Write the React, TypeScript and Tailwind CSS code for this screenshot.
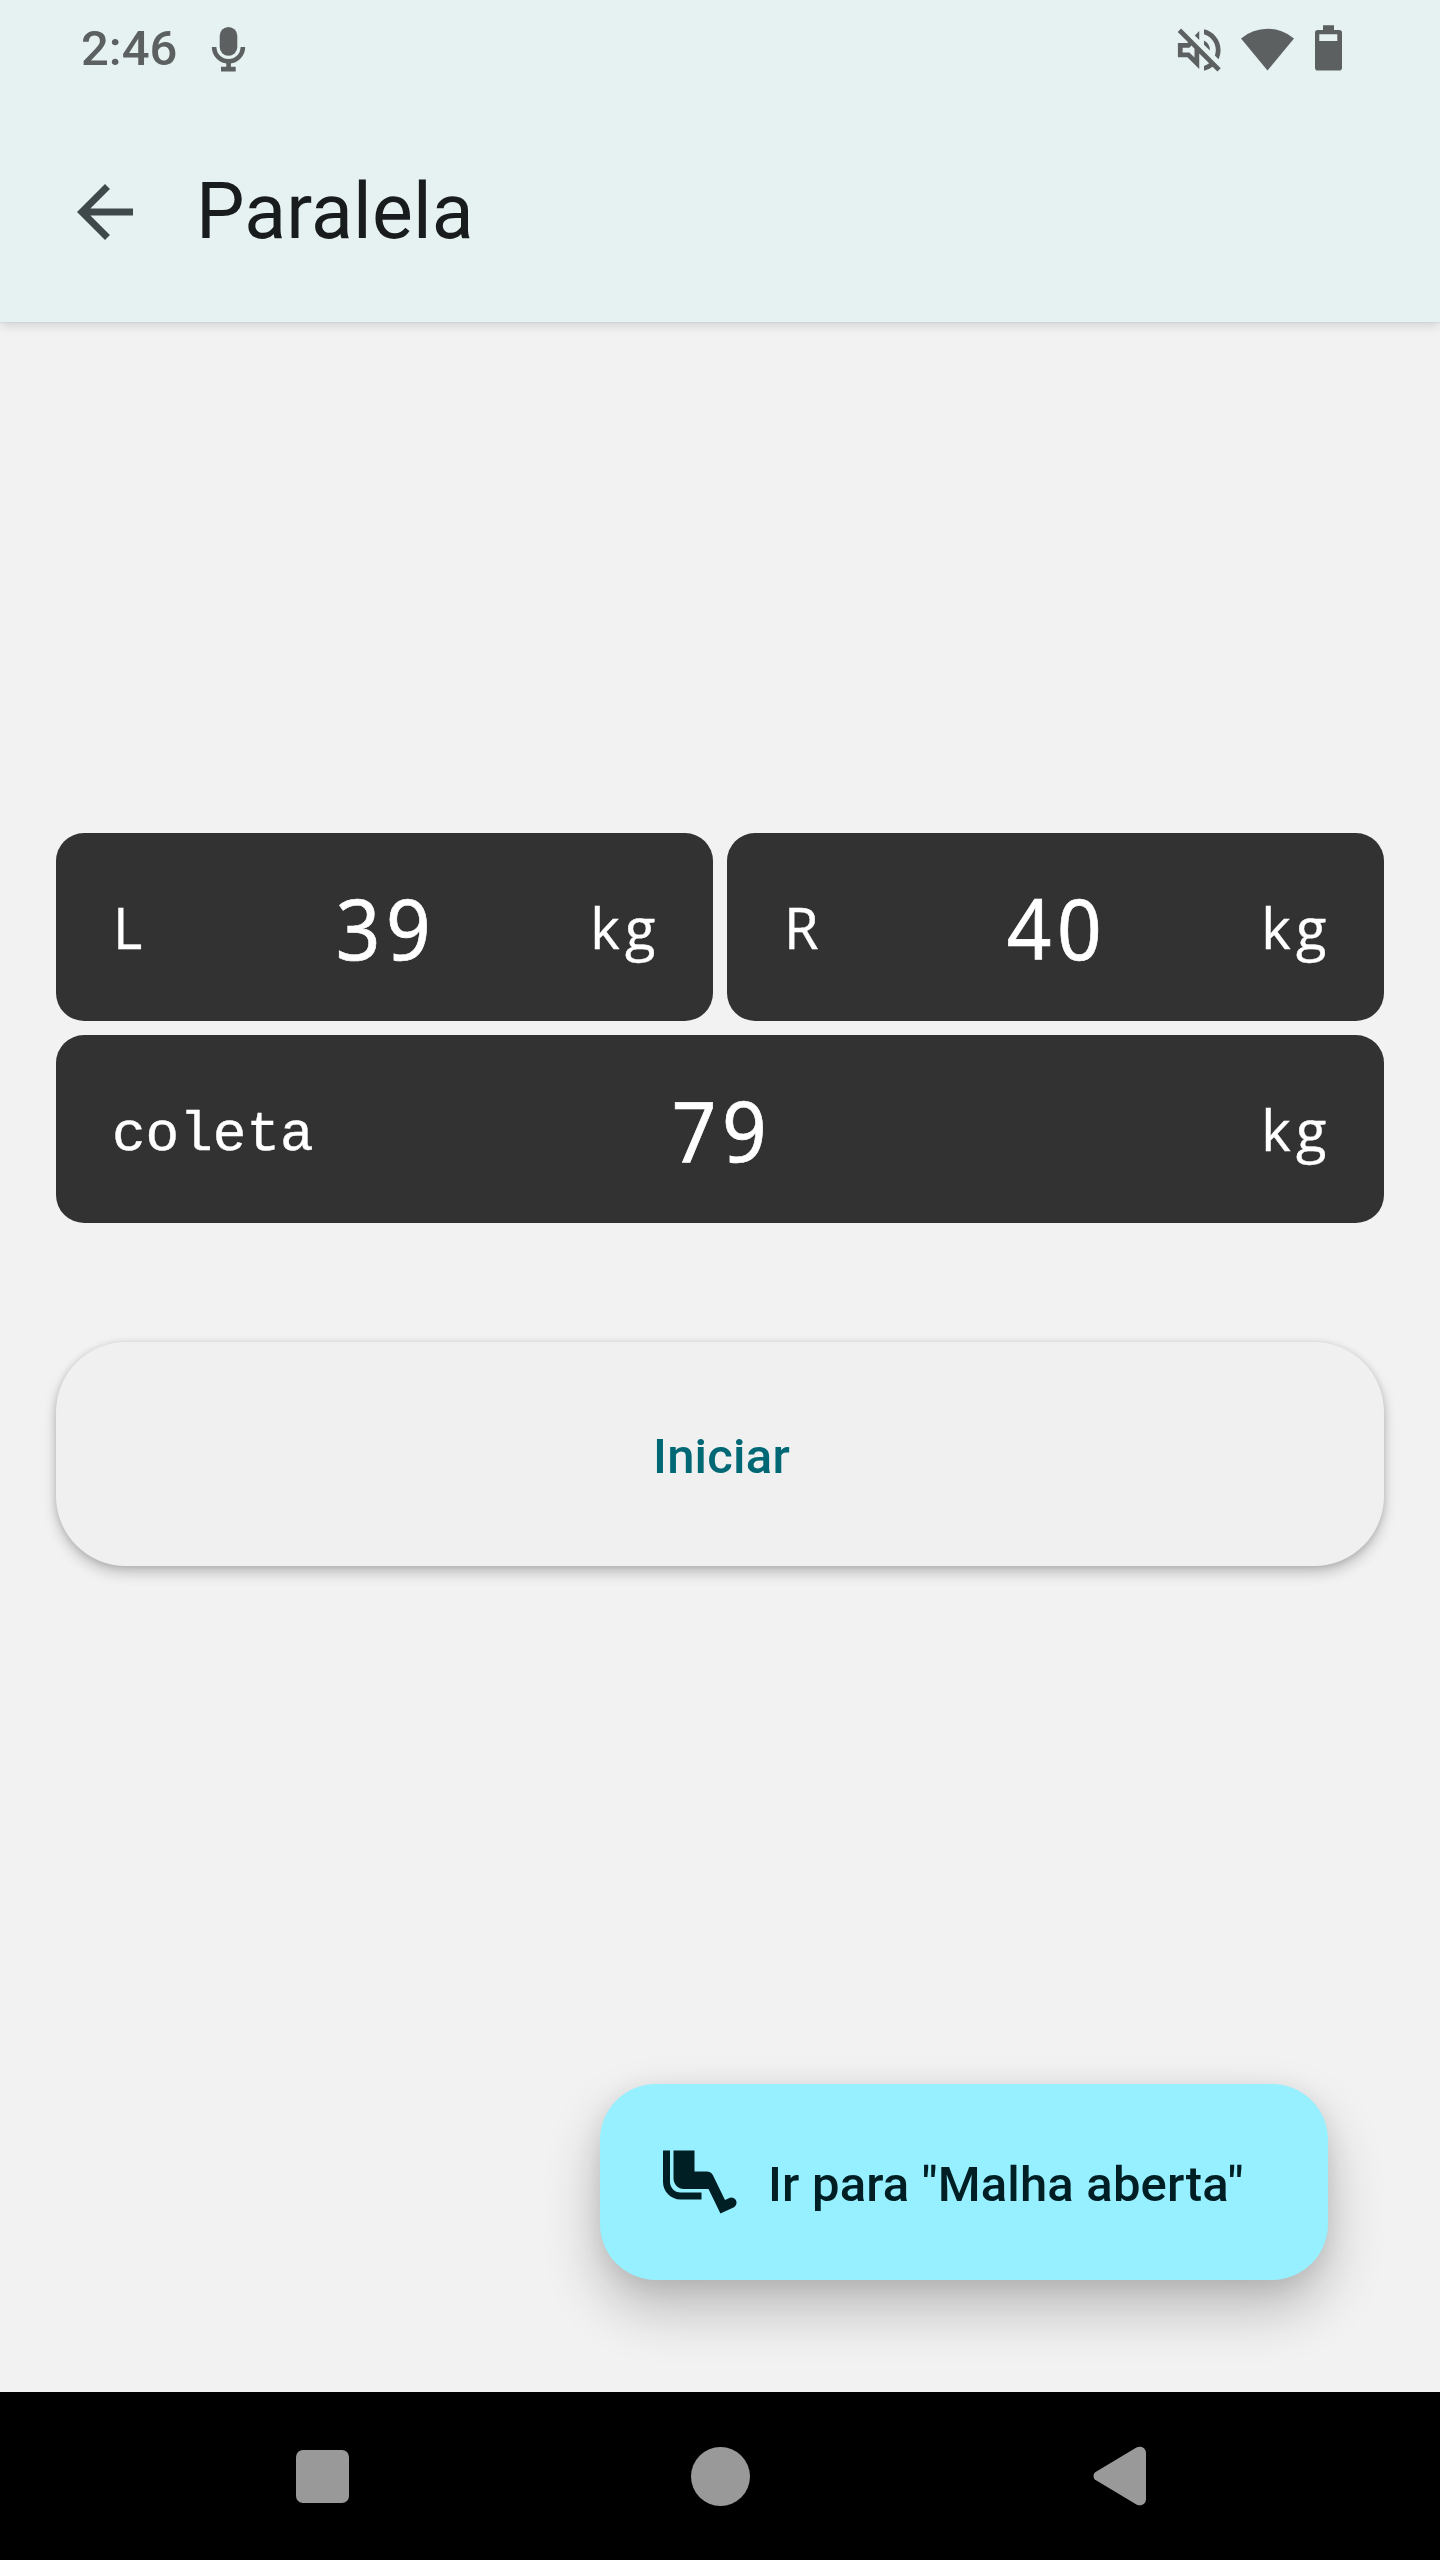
import React from "react";

function StatusBar() {
  return (
    <div className="flex h-[101px] items-start justify-between pl-[81px] pr-[90px]">
      <div className="flex h-[97px] items-center">
        <span className="w-[127px] text-[49px] font-medium leading-none">2:46</span>
        <svg width="40" height="56" viewBox="208 21 40 56" className="mt-px" fill="currentColor">
          <rect x="219.7" y="27" width="17.6" height="28.8" rx="8.8" />
          <path d="M214.1 47a14.4 14.4 0 0 0 28.8 0" fill="none" stroke="currentColor" strokeWidth="4.6" />
          <path d="M226.3 62h4.6v4.8h4.8v4.8H221v-4.8h5.3z" />
        </svg>
      </div>
      <svg width="180" height="60" viewBox="1170 20 180 60" className="mt-5" fill="currentColor">
        <g transform="translate(1170.8 21.6) scale(2.37)">
          <path d="M4.34 2.93L2.93 4.34 7.29 8.7 7 9H3v6h4l5 5v-6.59l4.18 4.18c-.65.49-1.38.88-2.18 1.11v2.06a8.94 8.94 0 0 0 3.61-1.75l2.05 2.05 1.41-1.41L4.34 2.93zM10 15.17L7.83 13H5v-2h2.83l.88-.88L10 11.41v3.76zM19 12c0 .82-.15 1.61-.41 2.34l1.53 1.53c.56-1.17.88-2.48.88-3.87 0-4.28-2.99-7.86-7-8.77v2.06c2.89.86 5 3.54 5 6.71zm-7-8l-1.88 1.88L12 7.76zm4.5 8A4.5 4.5 0 0 0 14 7.97v1.79l2.48 2.48c.01-.08.02-.16.02-.24z" />
        </g>
        <path d="M1241 38.4A41 41 0 0 1 1294 38.4L1267.5 70.4z" />
        <path
          fillRule="evenodd"
          d="M1323 25.3h11V30h5.2a2.8 2.8 0 0 1 2.8 2.8v35a2.8 2.8 0 0 1-2.8 2.8h-21.4a2.8 2.8 0 0 1-2.8-2.8v-35a2.8 2.8 0 0 1 2.8-2.8h5.2zM1319.3 34.3V41h18v-6.7z"
        />
      </svg>
    </div>
  );
}

function Reading({ label, value, wide = false }: { label: string; value: string; wide?: boolean }) {
  return (
    <div
      className={
        "grid h-[188px] grid-cols-[1fr_auto_1fr] items-center rounded-[28px] bg-[#323232] px-14 font-['Open_Sans',sans-serif] text-[56px] leading-none text-white [-webkit-text-stroke:0.4px_white]" +
        (wide ? " col-span-2" : "")
      }
    >
      {wide ? (
        <span className="pt-[12px] font-['Liberation_Mono',monospace]">{label}</span>
      ) : (
        <span className="pl-px tracking-tighter">{label}</span>
      )}
      <span className="scale-x-[0.93] pl-[4px] pt-[2px] font-['Noto_Sans',sans-serif] text-[84px] tracking-[6.2px] [-webkit-text-stroke:0.7px_white]">
        {value}
      </span>
      <span className="-mr-1 justify-self-end tracking-[5.5px]">kg</span>
    </div>
  );
}

export default function App() {
  return (
    <div className="flex h-[2560px] w-[1440px] flex-col overflow-hidden bg-[#f2f2f2] font-['Roboto',sans-serif]">
      <header className="relative h-[322px] bg-[#e6f2f2] text-[#5c6060] shadow-[0_3px_10px_rgba(0,0,0,0.14),0_0_2px_rgba(0,0,0,0.1)]">
        <StatusBar />
        <div className="flex h-[221px] items-center pl-[63px]">
          <svg width="84" height="84" viewBox="0 0 24 24" fill="#3f484a">
            <path d="M20 11H7.83l5.59-5.59L12 4l-8 8 8 8 1.41-1.41L7.83 13H20z" />
          </svg>
          <h1 className="ml-[49px] pt-[2px] text-[77px] font-normal leading-none tracking-[0.15px] text-[#191c1d]">
            Paralela
          </h1>
        </div>
      </header>

      <main className="flex flex-1 flex-col px-14 pt-[511px]">
        <div className="grid grid-cols-2 gap-[14px]">
          <Reading label="L" value="39" />
          <Reading label="R" value="40" />
          <Reading label="coleta" value="79" wide />
        </div>
        <button className="mt-[119px] h-[224px] rounded-[70px] bg-[#f0f0f0] pl-[3px] pt-1 text-[49px] font-medium leading-none tracking-[0.2px] text-[#006874] shadow-[0_7px_14px_rgba(0,0,0,0.2),0_1px_7px_rgba(0,0,0,0.14)]">
          Iniciar
        </button>
        <button className="mr-14 mt-auto mb-[112px] flex h-[196px] w-[728px] items-center gap-7 self-end rounded-[56px] bg-[#97f0ff] pl-14 text-[49px] font-medium leading-none tracking-[0.18px] text-[#001f24] shadow-[0_28px_56px_rgba(0,0,0,0.24),0_4px_24px_rgba(0,0,0,0.08)]">
          <svg width="84" height="84" viewBox="0 0 24 24" fill="currentColor">
            <path d="M4 12V3H2v9c0 2.76 2.24 5 5 5h6v-2H7c-1.66 0-3-1.34-3-3zm18.83 5.24c-.38-.72-1.29-.97-2.03-.63l-1.09.5-3.41-6.98C15.96 9.45 15.27 9 14.51 9L11 8.99V3H5v8c0 1.66 1.34 3 3 3h7l3.41 7 3.72-1.7c.77-.36 1.1-1.3.7-2.06z" />
          </svg>
          <span className="whitespace-nowrap pt-1">Ir para "Malha aberta"</span>
        </button>
      </main>

      <nav className="flex h-[168px] items-center justify-between bg-black pl-[296px] pr-[293px]">
        <div className="h-[53px] w-[53px] rounded-[7px] bg-[#999]" />
        <div className="mr-[2px] h-[59px] w-[59px] rounded-full bg-[#999]" />
        <svg width="54" height="60" viewBox="0 0 54 60" fill="#999">
          <path d="M2.6 26L43.4 1.6C48-.9 53 2 53 7V53C53 58 48 60.9 43.4 58.4L2.6 34C-.2 32-.2 28 2.6 26z" />
        </svg>
      </nav>
    </div>
  );
}
